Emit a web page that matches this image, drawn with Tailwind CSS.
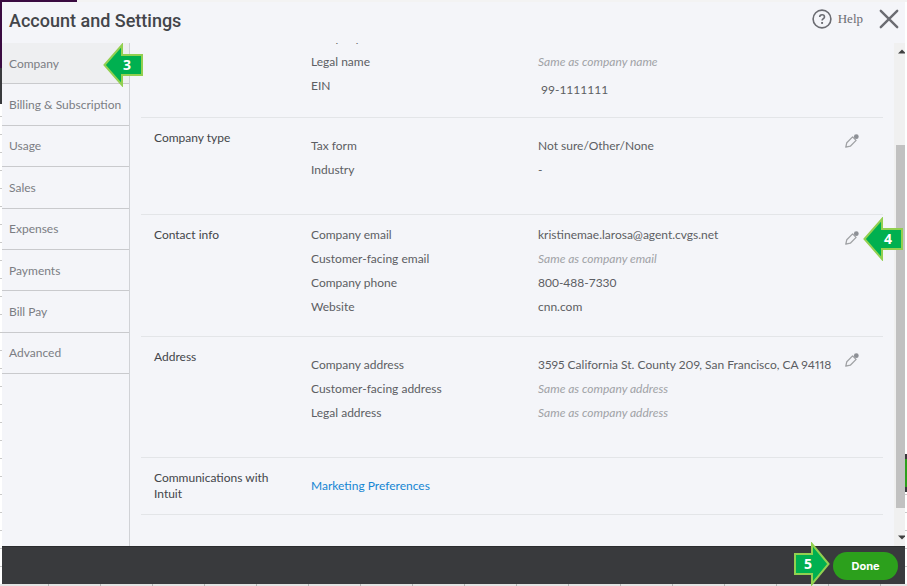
<!DOCTYPE html>
<html lang="en">
<head>
    <meta charset="UTF-8">
    <meta name="viewport" content="width=device-width, initial-scale=1.0">
    <title>Account and Settings</title>
    <script src="https://cdn.jsdelivr.net/npm/@tailwindcss/browser@4"></script>
</head>
<body class="h-screen flex flex-col overflow-hidden bg-white font-['Lato',sans-serif] text-xs text-[#5c5e63]">
    <!-- page behind the dialog: top edge -->
    <div class="h-[2px] shrink-0 flex bg-[#f3f3f3]"><div class="w-[77px] bg-[#3a0b41]"></div></div>

    <div class="flex flex-1 min-h-0">
        <!-- left edge -->
        <div class="w-[2px] shrink-0 flex flex-col">
            <div class="h-[66px] bg-[#3a0b41]"></div>
            <div class="h-9 bg-[#393a3d]"></div>
            <div class="flex-1 bg-[repeating-linear-gradient(to_bottom,#fff_0_17px,#c9c9c9_17px_18px)] bg-[position:0_-5px]"></div>
        </div>

        <div class="flex-1 min-w-0 flex flex-col bg-[#f4f5f9]">
            <header class="h-[41px] shrink-0 flex items-center justify-between pl-[7px] pr-[6px] pb-1">
                <h1 class="font-['Roboto',sans-serif] text-lg font-medium text-[#43454a]">Account and Settings</h1>
                <div class="flex items-center gap-4 pb-1">
                    <a href="#" class="flex items-center gap-[6px] font-['Liberation_Serif',serif] text-[13px] leading-5 text-[#6b6c72]">
                        <svg class="size-5" viewBox="0 0 20 20" fill="none" stroke="#6b6c72" stroke-width="1.6">
                            <circle cx="10" cy="10" r="8.9"/>
                            <path d="M7.7 8.1c0-1.4 1-2.3 2.4-2.3s2.4.9 2.4 2.1c0 1.7-2.4 1.8-2.4 3.7"/>
                            <path d="M10.1 13v1.9" stroke-width="1.9"/>
                        </svg>
                        Help
                    </a>
                    <button type="button" aria-label="Close">
                        <svg class="size-5 block" viewBox="0 0 20 20" stroke="#6b6c72" stroke-width="2.4" stroke-linecap="round">
                            <path d="M1.8 1.8l16.4 16.4M18.2 1.8L1.8 18.2"/>
                        </svg>
                    </button>
                </div>
            </header>

            <div class="flex flex-1 min-h-0">
                <nav class="w-32 shrink-0 border-r border-[#d0d2d6] text-[#7b7d83]">
                    <ul class="grid auto-rows-fr h-[331px]">
                        <li class="relative flex border-b border-[#c9cacd] bg-[#eeeff1]">
                            <a href="#" class="flex-1 flex items-center px-[7px] pt-px">Company</a>
                            <svg class="absolute z-10 left-[101px] top-0 w-10 h-11" viewBox="0 0 40 44">
                                <path d="M1.5 22L19 2v10h20v20H19v10z" fill="#00b050" stroke="#92d050" stroke-width="2"/>
                            </svg>
                            <span class="absolute z-10 left-[121px] top-3 leading-5 font-['Open_Sans',sans-serif] text-sm font-bold text-white">3</span>
                        </li>
                        <li class="flex border-b border-[#c9cacd]"><a href="#" class="flex-1 flex items-center px-[7px] pt-px whitespace-nowrap">Billing &amp; Subscription</a></li>
                        <li class="flex border-b border-[#c9cacd]"><a href="#" class="flex-1 flex items-center px-[7px] pt-px">Usage</a></li>
                        <li class="flex border-b border-[#c9cacd]"><a href="#" class="flex-1 flex items-center px-[7px] pt-px">Sales</a></li>
                        <li class="flex border-b border-[#c9cacd]"><a href="#" class="flex-1 flex items-center px-[7px] pt-px">Expenses</a></li>
                        <li class="flex border-b border-[#c9cacd]"><a href="#" class="flex-1 flex items-center px-[7px] pt-px">Payments</a></li>
                        <li class="flex border-b border-[#c9cacd]"><a href="#" class="flex-1 flex items-center px-[7px] pt-px">Bill Pay</a></li>
                        <li class="flex border-b border-[#c9cacd]"><a href="#" class="flex-1 flex items-center px-[7px] pt-px">Advanced</a></li>
                    </ul>
                </nav>

                <div class="flex flex-1 min-w-0 overflow-hidden">
                    <main class="flex-1 min-w-0 mx-[11px]">
                        <!-- scrolled partly out of view -->
                        <section class="-mt-[17px] h-[92px] grid grid-cols-[157px_227px_1fr] content-start pl-[13px] leading-6 border-b border-[#e3e5e8]">
                            <h2></h2>
                            <div>
                                <p>Company name</p>
                                <p>Legal name</p>
                                <p>EIN</p>
                            </div>
                            <div class="pt-6">
                                <p class="italic text-[#a0a2a6]">Same as company name</p>
                                <p class="pl-[3px] leading-8">99-1111111</p>
                            </div>
                        </section>

                        <section class="h-[97px] grid grid-cols-[157px_227px_1fr_auto] content-start pl-[13px] pr-6 leading-6 border-b border-[#e3e5e8]">
                            <h2 class="pt-2 text-[#43454a]">Company type</h2>
                            <div class="pt-4">
                                <p>Tax form</p>
                                <p>Industry</p>
                            </div>
                            <div class="pt-4">
                                <p>Not sure/Other/None</p>
                                <p>-</p>
                            </div>
                            <button type="button" aria-label="Edit company type" class="self-start pt-4">
                                <svg class="size-[14px] block" viewBox="0 0 14 14" fill="none" stroke="#a0a2a5" stroke-width="1.3" stroke-linejoin="round">
                                    <path d="M.8 13.2l1-4.500L7.600 2.900l3.500 3.500L5.300 12.200z"/>
                                    <circle cx="11.300" cy="2.700" r="2.400" fill="#8d9096" stroke="none"/>
                                </svg>
                            </button>
                        </section>

                        <section class="h-[122px] grid grid-cols-[157px_227px_1fr_auto] content-start pl-[13px] pr-6 leading-6 border-b border-[#e3e5e8]">
                            <h2 class="pt-2 text-[#43454a]">Contact info</h2>
                            <div class="pt-2">
                                <p>Company email</p>
                                <p>Customer-facing email</p>
                                <p>Company phone</p>
                                <p>Website</p>
                            </div>
                            <div class="pt-2">
                                <p>kristinemae.larosa@agent.cvgs.net</p>
                                <p class="italic text-[#a0a2a6]">Same as company email</p>
                                <p>800-488-7330</p>
                                <p>cnn.com</p>
                            </div>
                            <div class="relative self-start pt-4">
                                <button type="button" aria-label="Edit contact info" class="block">
                                    <svg class="size-[14px] block" viewBox="0 0 14 14" fill="none" stroke="#a0a2a5" stroke-width="1.3" stroke-linejoin="round">
                                        <path d="M.8 13.2l1-4.500L7.600 2.900l3.500 3.500L5.300 12.200z"/>
                                        <circle cx="11.300" cy="2.700" r="2.400" fill="#8d9096" stroke="none"/>
                                    </svg>
                                </button>
                                <svg class="absolute z-10 left-[18px] top-[2px] w-10 h-11" viewBox="0 0 40 44">
                                    <path d="M1.5 22L19 2v10h20v20H19v10z" fill="#00b050" stroke="#92d050" stroke-width="2"/>
                                </svg>
                                <span class="absolute z-10 left-[39px] top-[14px] leading-5 font-['Open_Sans',sans-serif] text-sm font-bold text-white">4</span>
                            </div>
                        </section>

                        <section class="h-[121px] grid grid-cols-[157px_227px_1fr_auto] content-start pl-[13px] pr-6 leading-6 border-b border-[#e3e5e8]">
                            <h2 class="pt-2 text-[#43454a]">Address</h2>
                            <div class="pt-4">
                                <p>Company address</p>
                                <p>Customer-facing address</p>
                                <p>Legal address</p>
                            </div>
                            <div class="pt-4">
                                <p class="whitespace-nowrap proportional-nums">3595 California St. County 209, San Francisco, CA 94118</p>
                                <p class="italic text-[#a0a2a6]">Same as company address</p>
                                <p class="italic text-[#a0a2a6]">Same as company address</p>
                            </div>
                            <button type="button" aria-label="Edit address" class="self-start pt-4">
                                <svg class="size-[14px] block" viewBox="0 0 14 14" fill="none" stroke="#a0a2a5" stroke-width="1.3" stroke-linejoin="round">
                                    <path d="M.8 13.2l1-4.500L7.600 2.900l3.500 3.500L5.300 12.200z"/>
                                    <circle cx="11.300" cy="2.700" r="2.400" fill="#8d9096" stroke="none"/>
                                </svg>
                            </button>
                        </section>

                        <section class="h-[57px] grid grid-cols-[157px_1fr] items-center pl-[13px] border-b border-[#e3e5e8]">
                            <h2 class="pr-8 leading-4 text-[#43454a]">Communications with Intuit</h2>
                            <a href="#" class="leading-4 text-[#1585d3]">Marketing Preferences</a>
                        </section>
                    </main>

                    <!-- scrollbar -->
                    <div class="w-[11px] shrink-0 flex flex-col bg-[#f0f0f0] pl-[2px]">
                        <svg class="h-[17px] w-[9px] shrink-0" viewBox="0 0 9 17" fill="#404040"><path d="M2 10.5l4-4 4 4z"/></svg>
                        <div class="h-[85px] shrink-0"></div>
                        <div class="h-[363px] shrink bg-[#c1c1c1]"></div>
                        <svg class="mt-auto h-[17px] w-[9px] shrink-0" viewBox="0 0 9 17" fill="#404040"><path d="M2 6.5l4 4 4-4z"/></svg>
                    </div>
                </div>
            </div>

            <footer class="h-[38px] shrink-0 flex items-center justify-end gap-[3px] pt-px pr-[7px] bg-[#393a3d] border-t border-[#2b2c2e]">
                <div class="relative mb-1">
                    <svg class="block w-9 h-11" viewBox="0 0 36 44">
                        <path d="M34.5 22L18 2v10H1v20h17v10z" fill="#00b050" stroke="#92d050" stroke-width="2"/>
                    </svg>
                    <span class="absolute left-[10px] top-3 leading-5 font-['Open_Sans',sans-serif] text-sm font-bold text-white">5</span>
                </div>
                <button type="button" class="w-[65px] h-7 pt-px rounded-full bg-[#2ca01c] font-['Inter',sans-serif] text-[11px] font-bold text-white">Done</button>
            </footer>
        </div>

        <!-- right edge -->
        <div class="w-[2px] shrink-0 flex flex-col">
            <div class="h-[452px]"></div>
            <div class="h-[38px] py-[5px] bg-[#393a3d]"><div class="h-full bg-[#2ca01c]"></div></div>
            <div class="flex-1 bg-[repeating-linear-gradient(to_bottom,#fff_0_17px,#c9c9c9_17px_18px)] bg-[position:0_-15px]"></div>
        </div>
    </div>

    <div class="h-[2px] shrink-0 bg-[repeating-linear-gradient(to_right,#e4e4e4_0_51px,#b5b5b5_51px_52px)] bg-[position:-3px_0]"></div>
</body>
</html>
